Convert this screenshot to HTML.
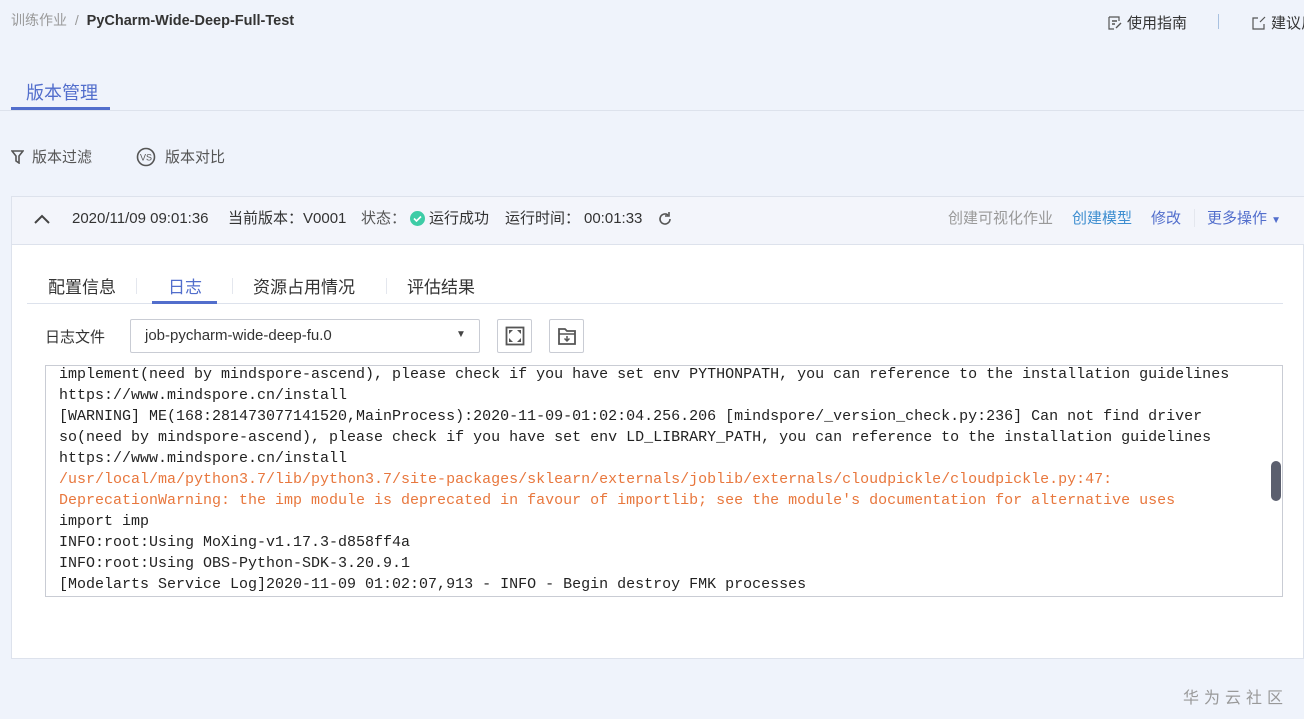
<!DOCTYPE html>
<html><head><meta charset="utf-8"><style>
*{margin:0;padding:0;box-sizing:border-box}
body{width:1304px;height:719px;overflow:hidden;background:#eff3fb;font-family:"Liberation Sans","Noto Sans CJK SC",sans-serif;color:#333;position:relative;font-size:15px}
.abs{position:absolute;white-space:nowrap}
.hr{line-height:20px;top:209px}
.mono{font-family:"Liberation Mono","DejaVu Sans Mono",monospace;font-size:15px}
</style></head><body>
<div class="abs" style="left:11px;top:10px;font-size:14px;color:#999">训练作业 <span style="margin:0 4px">/</span> <b style="color:#333;font-weight:bold;font-size:14.5px">PyCharm-Wide-Deep-Full-Test</b></div>
<div class="abs" style="left:1108px;top:12px;color:#333"><svg width="14" height="14" style="vertical-align:-2px;margin-right:5px"><path d="M1 1h10v4M1 1v12h5" fill="none" stroke="#555" stroke-width="1.2"/><path d="M4 5h5M4 8h3M8 12l5-5" stroke="#555" stroke-width="1.4"/></svg>使用指南</div>
<div class="abs" style="left:1218px;top:14px;width:1px;height:15px;background:#a9c1e0"></div>
<div class="abs" style="left:1252px;top:12px;color:#333"><svg width="14" height="14" style="vertical-align:-2px;margin-right:5px"><path d="M6 2H1v11h11V8" fill="none" stroke="#555" stroke-width="1.2"/><path d="M8 6l5-5" stroke="#555" stroke-width="1.2"/></svg>建议反馈</div>
<div class="abs" style="left:26px;top:79px;font-size:18px;color:#526ecc">版本管理</div>
<div class="abs" style="left:11px;top:107px;width:99px;height:3px;background:#526ecc"></div>
<div class="abs" style="left:0;top:110px;width:1304px;height:1px;background:#dde2ec"></div>
<div class="abs" style="left:11px;top:146px;color:#555"><svg width="13" height="14" style="vertical-align:-2px;margin-right:8px"><path d="M1 1h11L8 6v7l-3-2V6z" fill="none" stroke="#555" stroke-width="1.6"/></svg>版本过滤</div>
<div class="abs" style="left:136px;top:146px;color:#555"><svg width="20" height="20" style="vertical-align:-5px;margin-right:9px"><circle cx="10" cy="10" r="8.5" fill="none" stroke="#555" stroke-width="1.6"/><text x="10" y="13.5" font-size="9" text-anchor="middle" fill="#555" font-family="Liberation Sans">VS</text></svg>版本对比</div>
<div class="abs" style="left:11px;top:196px;width:1293px;height:463px;background:#fff;border:1px solid #dde2ec"></div>
<div class="abs" style="left:12px;top:197px;width:1292px;height:48px;background:#f3f5fb;border-bottom:1px solid #dde2ec"></div>
<svg class="abs" style="left:34px;top:214px" width="16" height="12"><path d="M1 9l7-7 7 7" fill="none" stroke="#444" stroke-width="2"/></svg>
<div class="abs hr" style="left:72px;color:#333">2020/11/09 09:01:36</div>
<div class="abs hr" style="left:228px;color:#333">当前版本：V0001</div>
<div class="abs hr" style="left:361px;color:#555">状态：</div>
<div class="abs" style="left:410px;top:211px;width:15px;height:15px;border-radius:50%;background:#3dcca6"><svg width="15" height="15" style="position:absolute;left:0;top:0"><path d="M4 7.5l2.5 2.5 4.5-4.5" fill="none" stroke="#fff" stroke-width="1.6"/></svg></div>
<div class="abs hr" style="left:429px;color:#333">运行成功</div>
<div class="abs hr" style="left:505px;color:#333">运行时间：</div>
<div class="abs hr" style="left:584px;color:#333">00:01:33</div>
<svg class="abs" style="left:657px;top:211px" width="16" height="16"><path d="M13 8a5 5 0 1 1-2-4" fill="none" stroke="#555" stroke-width="1.6"/><path d="M12 1v4H8" fill="none" stroke="#555" stroke-width="1.6"/></svg>
<div class="abs hr" style="left:948px;color:#999">创建可视化作业</div>
<div class="abs hr" style="left:1072px;color:#3e8ed0">创建模型</div>
<div class="abs hr" style="left:1151px;color:#526ecc">修改</div>
<div class="abs" style="left:1194px;top:209px;width:1px;height:18px;background:#e4e7ee"></div>
<div class="abs hr" style="left:1207px;color:#526ecc">更多操作 <span style="font-size:10px">▼</span></div>
<div class="abs" style="left:48px;top:273px;font-size:17px;color:#333">配置信息</div>
<div class="abs" style="left:168px;top:273px;font-size:17px;color:#526ecc">日志</div>
<div class="abs" style="left:253px;top:273px;font-size:17px;color:#333">资源占用情况</div>
<div class="abs" style="left:407px;top:273px;font-size:17px;color:#333">评估结果</div>
<div class="abs" style="left:136px;top:278px;width:1px;height:16px;background:#e4e7ee"></div>
<div class="abs" style="left:232px;top:278px;width:1px;height:16px;background:#e4e7ee"></div>
<div class="abs" style="left:386px;top:278px;width:1px;height:16px;background:#e4e7ee"></div>
<div class="abs" style="left:27px;top:303px;width:1256px;height:1px;background:#dde2ec"></div>
<div class="abs" style="left:152px;top:301px;width:65px;height:3px;background:#526ecc"></div>
<div class="abs" style="left:45px;top:326px;color:#333">日志文件</div>
<div class="abs" style="left:130px;top:319px;width:350px;height:34px;border:1px solid #c9ccd4;border-radius:2px"></div>
<div class="abs" style="left:145px;top:326px;line-height:20px;color:#333">job-pycharm-wide-deep-fu.0</div>
<div class="abs" style="left:456px;top:329px;font-size:10px;color:#444">▼</div>
<div class="abs" style="left:497px;top:319px;width:35px;height:34px;border:1px solid #c9ccd4;border-radius:2px"></div>
<svg class="abs" style="left:505px;top:326px" width="20" height="20"><rect x="1.5" y="1.5" width="17" height="17" fill="none" stroke="#555" stroke-width="1.8"/><path d="M4 4h4L4 8zM16 4v4l-4-4zM4 16v-4l4 4zM16 16h-4l4-4z" fill="#555"/></svg>
<div class="abs" style="left:549px;top:319px;width:35px;height:34px;border:1px solid #c9ccd4;border-radius:2px"></div>
<svg class="abs" style="left:557px;top:326px" width="20" height="20"><path d="M2 3h6l2 2h8v13H2z" fill="none" stroke="#555" stroke-width="1.8"/><path d="M2 8h16" stroke="#555" stroke-width="1.5"/><path d="M10 10v5M7.5 12.5L10 15l2.5-2.5" fill="none" stroke="#555" stroke-width="1.5"/></svg>
<div class="abs" style="left:45px;top:365px;width:1238px;height:232px;border:1px solid #c9ccd4;overflow:hidden"></div>
<div class="abs mono" style="left:59px;top:364px;line-height:21px;color:#222">implement(need by mindspore-ascend), please check if you have set env PYTHONPATH, you can reference to the installation guidelines<br>https://www.mindspore.cn/install<br>[WARNING] ME(168:281473077141520,MainProcess):2020-11-09-01:02:04.256.206 [mindspore/_version_check.py:236] Can not find driver<br>so(need by mindspore-ascend), please check if you have set env LD_LIBRARY_PATH, you can reference to the installation guidelines<br>https://www.mindspore.cn/install<br><span style="color:#e8773d">/usr/local/ma/python3.7/lib/python3.7/site-packages/sklearn/externals/joblib/externals/cloudpickle/cloudpickle.py:47:<br>DeprecationWarning: the imp module is deprecated in favour of importlib; see the module's documentation for alternative uses</span><br>import imp<br>INFO:root:Using MoXing-v1.17.3-d858ff4a<br>INFO:root:Using OBS-Python-SDK-3.20.9.1<br>[Modelarts Service Log]2020-11-09 01:02:07,913 - INFO - Begin destroy FMK processes</div>
<div class="abs" style="left:1271px;top:461px;width:10px;height:40px;border-radius:5px;background:#5b5f6e"></div>
<div class="abs" style="left:1183px;top:684px;font-size:16px;color:#999;letter-spacing:5px">华为云社区</div>
</body></html>
